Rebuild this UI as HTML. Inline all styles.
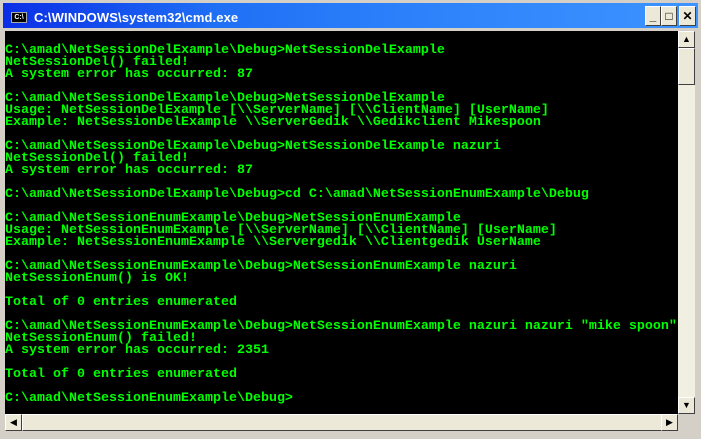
<!DOCTYPE html>
<html><head><style>
*{margin:0;padding:0;box-sizing:border-box}
body{width:701px;height:439px;background:#d4d0c8;position:relative;overflow:hidden;font-family:"Liberation Sans",sans-serif}
.tb{position:absolute;left:3px;top:3px;width:695px;height:25px;background:linear-gradient(90deg,#0a2ee6 0%,#1f6ff5 30%,#2d82fb 60%,#3d93ff 100%)}
.title{position:absolute;left:31px;top:7px;color:#fff;font-weight:bold;font-size:13px;letter-spacing:0.1px}
.ico{position:absolute;left:8px;top:9px;width:16px;height:11px;background:#000;border:1px solid #aaa;color:#fff;font-size:7px;line-height:9px;font-weight:bold;text-align:center}
.btn{position:absolute;top:6px;width:16px;height:20px;background:#ece9d8;border:1px solid;border-color:#fff #404040 #404040 #fff;font-size:12px;font-weight:bold;text-align:center;line-height:18px;color:#000}
.con{position:absolute;left:5px;top:31px;width:673px;height:383px;background:#000;overflow:hidden}
pre{position:absolute;left:0;top:14px;font-family:"Liberation Mono",monospace;font-size:13.33px;line-height:12px;color:#00ff00;font-weight:bold;white-space:pre}
.vs{position:absolute;left:678px;top:31px;width:17px;height:383px;background:#f1efe2}
.hs{position:absolute;left:5px;top:414px;width:673px;height:17px;background:#f1efe2}
.sb{position:absolute;width:17px;height:17px;background:#ece9d8;border:1px solid;border-color:#fff #404040 #404040 #fff;font-size:9px;line-height:15px;text-align:center;color:#000}
</style></head><body>
<div class="tb"><div class="ico">C:\</div><div class="title">C:\WINDOWS\system32\cmd.exe</div></div>
<div class="btn" style="left:645px">_</div>
<div class="btn" style="left:661px">□</div>
<div class="btn" style="left:679px;width:17px">✕</div>
<div class="con"><pre>C:\amad\NetSessionDelExample\Debug>NetSessionDelExample
NetSessionDel() failed!
A system error has occurred: 87

C:\amad\NetSessionDelExample\Debug>NetSessionDelExample
Usage: NetSessionDelExample [\\ServerName] [\\ClientName] [UserName]
Example: NetSessionDelExample \\ServerGedik \\Gedikclient Mikespoon

C:\amad\NetSessionDelExample\Debug>NetSessionDelExample nazuri
NetSessionDel() failed!
A system error has occurred: 87

C:\amad\NetSessionDelExample\Debug>cd C:\amad\NetSessionEnumExample\Debug

C:\amad\NetSessionEnumExample\Debug>NetSessionEnumExample
Usage: NetSessionEnumExample [\\ServerName] [\\ClientName] [UserName]
Example: NetSessionEnumExample \\Servergedik \\Clientgedik UserName

C:\amad\NetSessionEnumExample\Debug>NetSessionEnumExample nazuri
NetSessionEnum() is OK!

Total of 0 entries enumerated

C:\amad\NetSessionEnumExample\Debug>NetSessionEnumExample nazuri nazuri "mike spoon"
NetSessionEnum() failed!
A system error has occurred: 2351

Total of 0 entries enumerated

C:\amad\NetSessionEnumExample\Debug></pre></div>
<div class="vs"><div class="sb" style="left:0;top:0">▲</div><div class="sb" style="left:0;top:17px;height:37px"></div><div class="sb" style="left:0;top:366px">▼</div></div>
<div class="hs"><div class="sb" style="left:0;top:0">◀</div><div class="sb" style="left:17px;top:0;width:640px"></div><div class="sb" style="left:656px;top:0">▶</div></div>
</body></html>
